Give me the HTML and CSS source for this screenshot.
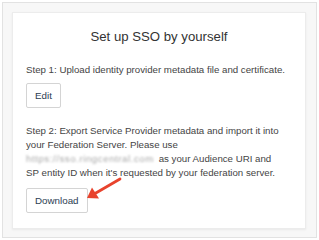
FILE: index.html
```html
<!DOCTYPE html>
<html lang="en">
<head>
    <meta charset="UTF-8">
    <meta name="viewport" content="width=device-width, initial-scale=1.0">
    <title>Set up SSO</title>
    <link rel="stylesheet" href="styles.css">
</head>
<body>
    <div class="frame">
        <section class="card">
            <h2 class="title">Set up SSO by yourself</h2>
            <p class="step">Step 1: Upload identity provider metadata file and certificate.</p>
            <button class="btn" type="button">Edit</button>
            <p class="step step-two">Step 2: Export Service Provider metadata and import it into your Federation Server. Please use <span class="blurred">https://sso.ringcentral.com</span> as your Audience URI and SP&nbsp;entity ID when it's requested by your federation server.</p>
            <button class="btn" type="button">Download</button>

            <!-- annotation arrow pointing at the download button -->
            <svg class="arrow" width="50" height="35" viewBox="0 0 50 35">
                <line x1="40" y1="9" x2="15" y2="23.5" stroke="#e8432d" stroke-width="2.8" stroke-linecap="round"/>
                <polygon points="7,28 19,28.5 12,17.5" fill="#e8432d"/>
            </svg>
        </section>
    </div>
</body>
</html>
```

FILE: styles.css
```css
html, body {
    margin: 0;
    padding: 0;
}

body {
    font-family: "Liberation Sans", Arial, sans-serif;
    background-color: #ffffff;
    width: 319px;
    height: 240px;
    overflow: hidden;
}

.frame {
    margin: 2px;
    height: 236px;
    box-sizing: border-box;
    border: 1px solid #e2e2e2;
    background-color: #f7f7f7;
    padding: 9px 10px 0 9px;
}

.card {
    position: relative;
    background-color: #ffffff;
    border: 1px solid #ececec;
    box-shadow: 0 1px 2px rgba(0, 0, 0, 0.06);
    padding: 15px 13px 15px 13px;
}

.title {
    margin: 0 0 17px;
    font-size: 13.2px;
    line-height: 18px;
    font-weight: normal;
    text-align: center;
    color: #333333;
}

.step {
    margin: 0 0 6px;
    font-size: 9.7px;
    line-height: 14px;
    color: #444444;
}

.step-two {
    margin-top: 16px;
    margin-bottom: 8px;
}

.blurred {
    display: inline-block;
    width: 130px;
    letter-spacing: 0.55px;
    white-space: nowrap;
    vertical-align: bottom;
    color: #a8a8a8;
    filter: blur(1.2px);
}

.btn {
    display: block;
    font-family: inherit;
    font-size: 9.8px;
    color: #2b3d52;
    background-color: #ffffff;
    border: 1px solid #d4d4d4;
    border-radius: 2px;
    height: 25px;
    padding: 0 8px;
}

.arrow {
    position: absolute;
    left: 67px;
    top: 157px;
}
```
